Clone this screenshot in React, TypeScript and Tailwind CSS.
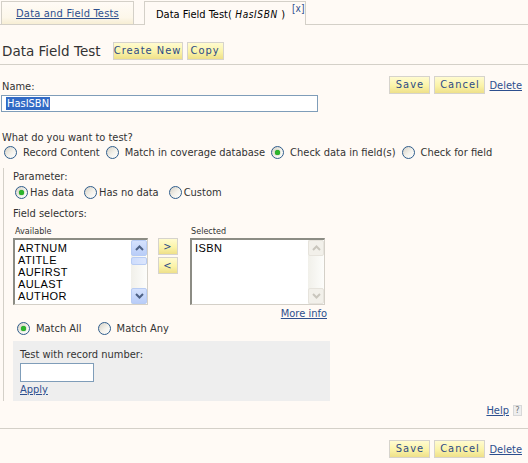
import * as React from "react"

const font = "font-['DejaVu_Sans_Condensed','DejaVu_Sans',sans-serif]"

function Radio({ checked }: { checked?: boolean }) {
  return (
    <span className="relative inline-flex h-[13px] w-[13px] shrink-0 items-center justify-center rounded-full border border-[#2f5d8c] bg-[linear-gradient(135deg,#d6d1c6_0%,#f4f2ec_55%,#ffffff_100%)]">
      {checked && (
        <span className="h-[5px] w-[5px] rounded-full bg-[#2cb52c] shadow-[0_0_1px_#0a7a0a]" />
      )}
    </span>
  )
}

function RadioOption({
  label,
  checked,
  gap = "gap-[6px]",
}: {
  label: string
  checked?: boolean
  gap?: string
}) {
  return (
    <label className={`flex items-center ${gap}`}>
      <Radio checked={checked} />
      <span>{label}</span>
    </label>
  )
}

function YellowButton({
  children,
  w,
  h = "h-[18px]",
}: {
  children: React.ReactNode
  w: string
  h?: string
}) {
  return (
    <button
      className={`${h} ${w} border border-[#d6d3cc] bg-[linear-gradient(180deg,#fffbd0_0%,#fbf3a8_55%,#eee08a_100%)] text-center text-[11px] leading-[14px] tracking-[1px] text-[#2d4b86]`}
    >
      {children}
    </button>
  )
}

function Link({ children, className = "" }: { children: React.ReactNode; className?: string }) {
  return <a className={`text-[#2d4f8e] underline ${className}`}>{children}</a>
}

function Chevron({ up, color }: { up?: boolean; color: string }) {
  return (
    <svg width="9" height="6" viewBox="0 0 9 6">
      <path
        d={up ? "M1 5 L4.5 1.5 L8 5" : "M1 1 L4.5 4.5 L8 1"}
        fill="none"
        stroke={color}
        strokeWidth="2"
      />
    </svg>
  )
}

function ScrollBar({ disabled }: { disabled?: boolean }) {
  const btn = disabled
    ? "border-[#e6e3dc] bg-[#f2f0ea]"
    : "border-[#b8ccf4] bg-[linear-gradient(180deg,#d5e2fd_0%,#b9cdf8_100%)]"
  const arrow = disabled ? "#c9c6bd" : "#4d6185"
  return (
    <div className="flex w-[16px] flex-col bg-[linear-gradient(90deg,#f1f0ea_0%,#fdfdfb_100%)]">
      <div className={`flex h-[16px] items-center justify-center rounded-[2px] border ${btn}`}>
        <Chevron up color={arrow} />
      </div>
      {!disabled && (
        <div className="mt-[1px] h-[8px] rounded-[2px] border border-[#b8ccf4] bg-[linear-gradient(90deg,#cddcfc_0%,#dce6fd_100%)]" />
      )}
      <div className="flex-1" />
      <div className={`flex h-[16px] items-center justify-center rounded-[2px] border ${btn}`}>
        <Chevron color={arrow} />
      </div>
    </div>
  )
}

function ListBox({ items, disabled }: { items: string[]; disabled?: boolean }) {
  return (
    <div className="flex h-[67px] w-[135px] border border-t-2 border-l-2 border-[#8c8c84] border-r-[#d4d0c8] border-b-[#d4d0c8] bg-white">
      <div className="flex-1 overflow-hidden pl-[3px] pt-[2px] font-['Liberation_Sans',sans-serif] text-[11px] leading-[12px] tracking-[0.4px] text-black">
        {items.map((it) => (
          <div key={it}>{it}</div>
        ))}
      </div>
      <ScrollBar disabled={disabled} />
    </div>
  )
}

function ActionRow() {
  return (
    <div className="flex items-center gap-[4px]">
      <YellowButton w="w-[41px]">Save</YellowButton>
      <YellowButton w="w-[51px]">Cancel</YellowButton>
      <Link>Delete</Link>
    </div>
  )
}

export default function App() {
  return (
    <div className={`h-[463px] w-[528px] overflow-hidden bg-[#fffaf5] text-[11px] leading-[13px] text-[#333] ${font}`}>
      {/* tabs */}
      <div className="flex h-[25px] items-end border-b border-[#d4d0c8] pl-[1px]">
        <div className="-mb-px flex h-[24px] w-[133px] items-center justify-center border border-[#d4d0c8] bg-[linear-gradient(180deg,#fffbf6_0%,#fdf7ea_70%,#f7eed4_100%)]">
          <Link className="text-[11px] tracking-[0.2px]">Data and Field Tests</Link>
        </div>
        <div className="-mb-px ml-[10px] flex h-[24px] w-[162px] whitespace-nowrap border border-b-0 border-[#d4d0c8] bg-[#fffaf5] pl-[11px] pt-[6px]">
          <span className="text-black">
            Data Field Test(
            <i className="text-[10px] tracking-[0.6px]"> HasISBN </i>)
          </span>
          <span className="ml-[7px] -mt-[6px] text-[10px] text-[#2d4f8e]">[x]</span>
        </div>
      </div>

      {/* title */}
      <div className="flex items-center border-b border-[#d4d0c8] pb-[4px] pl-[2px] pt-[17px]">
        <h1 className="font-['DejaVu_Sans',sans-serif] text-[13.5px] leading-[16px] text-[#333]">
          Data Field Test
        </h1>
        <div className="ml-[12px] flex gap-[4px]">
          <YellowButton w="w-[70px]">Create New</YellowButton>
          <YellowButton w="w-[37px]">Copy</YellowButton>
        </div>
      </div>

      {/* name */}
      <div className="flex items-end justify-between pl-[2px] pr-[6px] pt-[11px]">
        <span className="mb-[1px]">Name:</span>
        <ActionRow />
      </div>
      <div className="pl-[1px] pt-[1px]">
        <div className="flex h-[17px] w-[317px] items-center border border-[#7f9db9] bg-white pl-[4px]">
          <span className="bg-[#316ac5] px-[1px] text-white">HasISBN</span>
        </div>
      </div>

      <div className="pl-[2px] pt-[19px]">What do you want to test?</div>
      <div className="flex items-center gap-[6px] pl-[4px] pt-[2px]">
        <RadioOption label="Record Content" />
        <RadioOption label="Match in coverage database" />
        <RadioOption label="Check data in field(s)" checked />
        <RadioOption label="Check for field" />
      </div>

      {/* fieldset */}
      <div className="ml-[3px] mt-[9px] border-l border-[#d4d0c8] pl-[9px] pt-[2px]">
        <div>Parameter:</div>
        <div className="flex items-center gap-[10px] pl-[2px] pt-[3px]">
          <RadioOption label="Has data" checked gap="gap-[2px]" />
          <RadioOption label="Has no data" gap="gap-[2px]" />
          <RadioOption label="Custom" gap="gap-[2px]" />
        </div>
        <div className="pt-[8px]">Field selectors:</div>

        <div className="flex items-start pt-[6px]">
          <div>
            <div className="mb-[2px] pl-[2px] text-[9px] leading-[10px]">Available</div>
            <ListBox items={["ARTNUM", "ATITLE", "AUFIRST", "AULAST", "AUTHOR", "BDATE"]} />
          </div>
          <div className="ml-[10px] mt-[12px] flex flex-col gap-[2px]">
            <YellowButton w="w-[20px]" h="h-[17px]">&gt;</YellowButton>
            <YellowButton w="w-[20px]" h="h-[17px]">&lt;</YellowButton>
          </div>
          <div className="ml-[12px]">
            <div className="mb-[2px] pl-[1px] text-[9px] leading-[10px]">Selected</div>
            <ListBox items={["ISBN"]} disabled />
          </div>
        </div>
        <div className="flex w-[314px] justify-end pt-[2px]">
          <Link>More info</Link>
        </div>

        <div className="flex items-center gap-[16px] pl-[4px] pt-[2px]">
          <RadioOption label="Match All" checked />
          <RadioOption label="Match Any" />
        </div>

        <div className="mt-[6px] w-[317px] bg-[#eeeeee] pb-[5px] pl-[7px] pt-[7px]">
          <div>Test with record number:</div>
          <div className="mt-[2px] h-[19px] w-[74px] border border-[#7f9db9] bg-white" />
          <Link className="mt-[1px] block w-fit">Apply</Link>
        </div>
      </div>

      {/* help */}
      <div className="flex items-center justify-end gap-[4px] pr-[6px] pt-[3px]">
        <Link>Help</Link>
        <span className="flex h-[11px] w-[9px] items-center justify-center border border-[#d8d8d8] bg-[#eeeeee] text-[9px] leading-[9px] text-[#777]">
          ?
        </span>
      </div>
      <div className="mt-[11px] border-b border-[#d4d0c8]" />
      <div className="flex justify-end pr-[6px] pt-[11px]">
        <ActionRow />
      </div>
    </div>
  )
}
